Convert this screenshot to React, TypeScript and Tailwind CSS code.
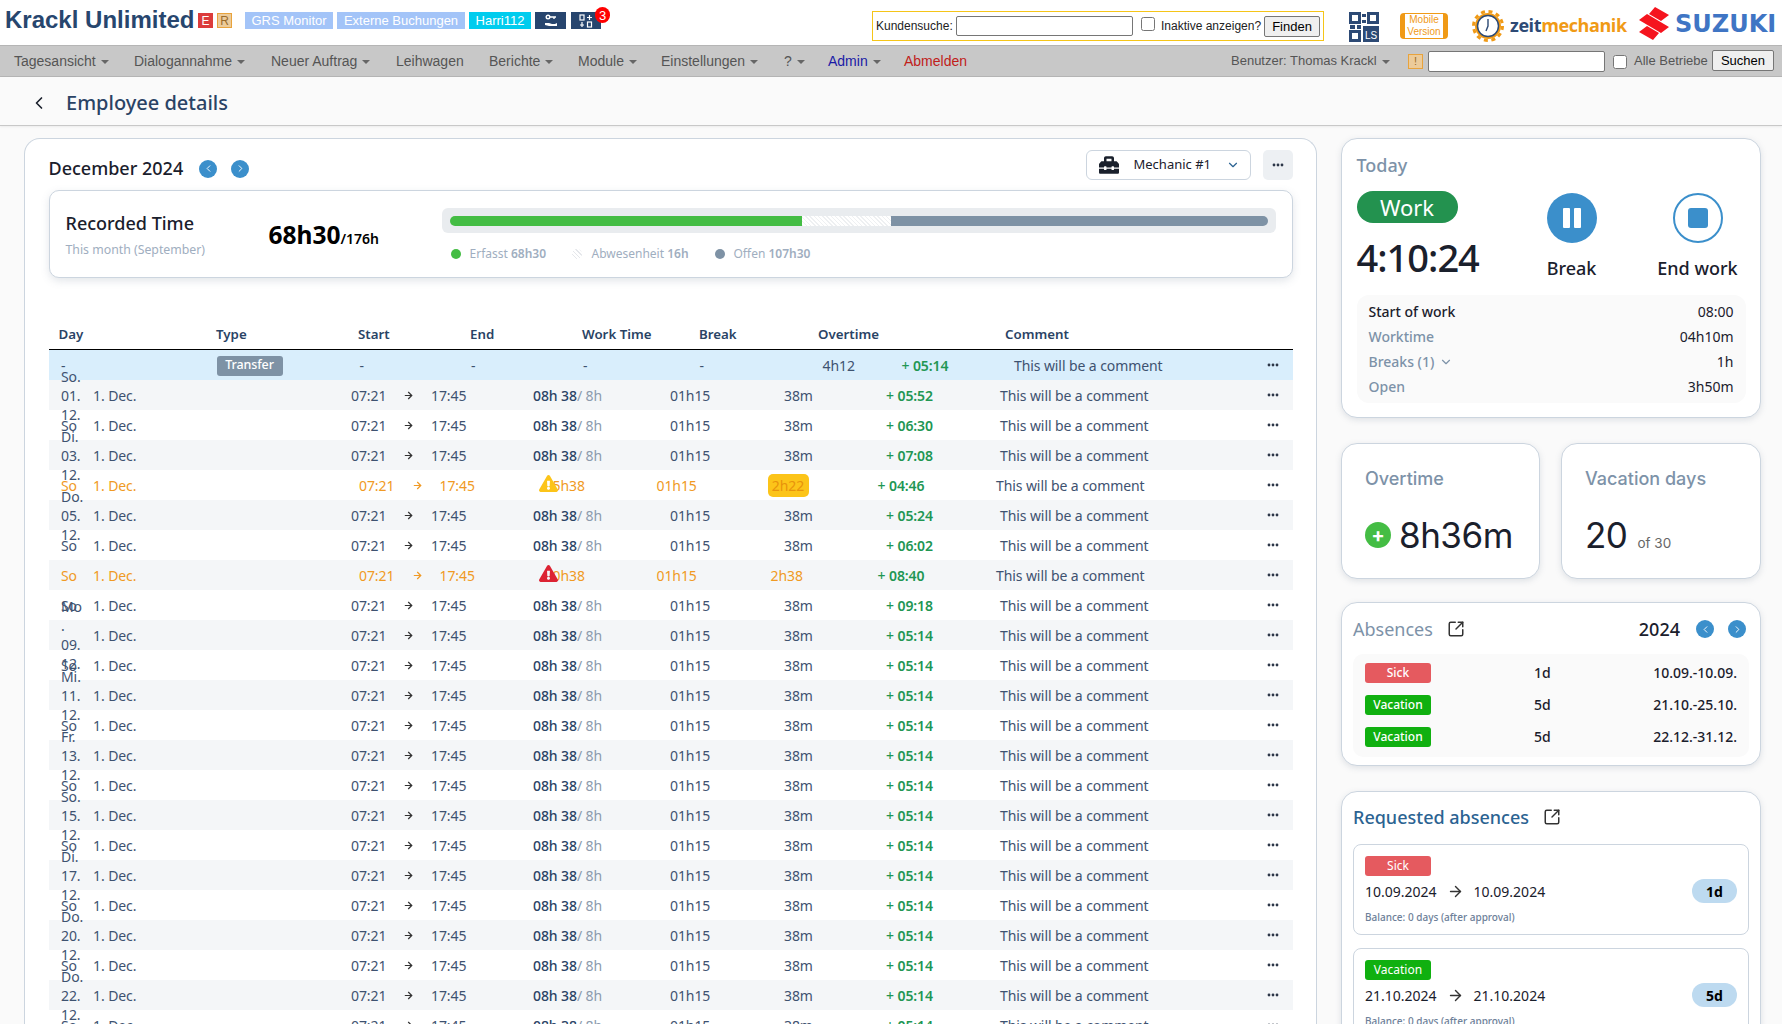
import React from "react";
import { ChevronDown, ChevronLeft, ChevronRight, ArrowRight, SquareArrowOutUpRight } from "lucide-react";
import { FaToolbox, FaExclamationTriangle } from "react-icons/fa";

const Caret = () => <span className="ml-[5px] inline-block border-x-[4px] border-t-[4px] border-x-transparent border-t-[#666] align-middle" />;

const Dots = () => (
  <svg width="12" height="4" viewBox="0 0 12 4" className="fill-[#2d3748]"><circle cx="2" cy="2" r="1.4" /><circle cx="6" cy="2" r="1.4" /><circle cx="10" cy="2" r="1.4" /></svg>
);

const RoundNav = ({ dir }: { dir: "l" | "r" }) => (
  <span className="flex h-[18px] w-[18px] items-center justify-center rounded-full bg-[#3b8fcb] text-white">
    {dir === "l" ? <ChevronLeft size={11} strokeWidth={2} /> : <ChevronRight size={11} strokeWidth={2} />}
  </span>
);

const Tag = ({ kind }: { kind: "Sick" | "Vacation" }) => (
  <span className={`flex h-[20px] w-[66px] items-center justify-center rounded-[3px] text-[12px] text-white ${kind === "Sick" ? "bg-[#e55a5f]" : "bg-[#10b010]"}`}>{kind}</span>
);

function Header() {
  return (
    <header className="flex h-[45px] items-start bg-white font-['Liberation_Sans',sans-serif]">
      <h1 className="ml-[5px] mt-[4px] w-[187px] whitespace-nowrap text-[24px] font-bold leading-[32px] text-[#27466e]">Krackl Unlimited</h1>
      <span className="ml-[6px] mt-[13px] flex h-[15px] w-[15px] items-center justify-center bg-[#dc3c3c] text-[12px] leading-none text-[#fff]">E</span>
      <span className="ml-[4px] mt-[13px] flex h-[15px] w-[15px] items-center justify-center border border-[#e8a33c] bg-[#eccb9a] text-[12px] leading-none text-[#9a6b2a]">R</span>
      <span className="ml-[13px] mt-[12px] flex h-[17px] w-[88px] items-center justify-center bg-[#a3c4f8] text-[13px] text-white">GRS Monitor</span>
      <span className="ml-[4px] mt-[12px] flex h-[17px] w-[128px] items-center justify-center whitespace-nowrap bg-[#a3c4f8] text-[13px] text-white">Externe Buchungen</span>
      <span className="ml-[4px] mt-[12px] flex h-[17px] w-[62px] items-center justify-center bg-[#00ccee] text-[13px] text-white">Harri112</span>
      <span className="ml-[4px] mt-[12px] flex h-[17px] w-[31px] items-center justify-center bg-[#27456e]">
        <svg width="16" height="14" viewBox="0 0 16 14" fill="none" stroke="#fff"><circle cx="5" cy="3" r="1.8" strokeWidth="1.4" /><path d="M7 3h6M11 3v2" strokeWidth="1.4" /><path d="M2 9h4l3 1h3l2-1v3H6l-4-1z" fill="#fff" stroke="none" /></svg>
      </span>
      <span className="relative ml-[5px] mt-[12px] flex h-[17px] w-[30px] items-center justify-center bg-[#27456e]">
        <svg width="14" height="14" viewBox="0 0 14 14" fill="none" stroke="#fff" strokeWidth="1.2"><rect x="1" y="1" width="4" height="5" /><path d="M8 3.5h5M10.5 1v5" /><path d="M3 8v5M1 11h4" /><rect x="8.5" y="8" width="4" height="5" /></svg>
        <span className="absolute left-[24px] top-[-5px] flex h-[16px] w-[15px] items-center justify-center rounded-full bg-[#f00] text-[13px] leading-none text-white">3</span>
      </span>
      <div className="ml-[271px] mt-[11px] flex h-[30px] w-[452px] items-center border border-[#f5c518] pl-[3px] text-[12px] text-[#222]">
        <span className="w-[80px] whitespace-nowrap">Kundensuche:</span>
        <input className="h-[20px] w-[177px] rounded-[2px] border border-[#767676] bg-white" />
        <input type="checkbox" className="-mt-[4px] ml-[8px] h-[14px] w-[14px]" />
        <span className="ml-[6px] w-[100px] whitespace-nowrap">Inaktive anzeigen?</span>
        <button className="ml-[3px] h-[21px] w-[56px] rounded-[2px] border border-[#767676] bg-[#efefef] text-[13px] text-black">Finden</button>
      </div>
      <svg width="30" height="30" viewBox="0 0 30 30" className="ml-[25px] mt-[12px]">
        <rect width="30" height="30" fill="#fff" />
        <g fill="#2d4a75">
          <rect x="0" y="0" width="12" height="12" /><rect x="18" y="0" width="12" height="12" /><rect x="0" y="18" width="12" height="12" /><rect x="14" y="14" width="16" height="16" />
          <rect x="13" y="2" width="4" height="3" /><rect x="13" y="8" width="4" height="3" /><rect x="1" y="13" width="5" height="4" /><rect x="8" y="13" width="4" height="4" />
        </g>
        <g fill="#fff"><rect x="3" y="3" width="6" height="6" /><rect x="21" y="3" width="6" height="6" /><rect x="3" y="21" width="6" height="6" /></g>
        <text x="16" y="27" fill="#fff" fontSize="10" fontFamily="Liberation Sans">LS</text>
      </svg>
      <div className="ml-[21px] mt-[13px] flex h-[26px] w-[48px] flex-col items-center justify-center rounded-[4px] border-x-[5px] border-y-[1px] border-[#f09a16] bg-white text-[10px] leading-[12px] text-[#f09a16]">
        <span>Mobile</span><span>Version</span>
      </div>
      <svg width="32" height="32" viewBox="0 0 32 32" className="ml-[24px] mt-[10px]">
        <circle cx="16" cy="16" r="13" fill="#f09a16" />
        <circle cx="16" cy="16" r="14.5" fill="none" stroke="#f09a16" strokeWidth="3" strokeDasharray="4 3.6" />
        <circle cx="16" cy="16" r="10.5" fill="#fff" stroke="#2d4a75" strokeWidth="1.5" />
        <path d="M16 9v7l-2 5" fill="none" stroke="#2d4a75" strokeWidth="1.4" />
      </svg>
      <div className="ml-[6px] mt-[13px] w-[118px] whitespace-nowrap text-[18px] font-bold leading-[24px] font-['Open_Sans',sans-serif] tracking-[-0.4px]">
        <span className="text-[#2d4a75]">zeit</span><span className="text-[#f09a16]">mechanik</span>
      </div>
      <svg width="32" height="33" viewBox="0 0 32 33" className="ml-[10px] mt-[7px]">
        <path d="M17 0 L31 8 L23 14 L11 7 Z M1 13 L9 7 L31 20 L23 26 Z M1 25 L9 19 L21 26 L15 33 Z" fill="#f5141e" />
      </svg>
      <div className="ml-[5px] mt-[11px] whitespace-nowrap text-[24px] font-bold leading-[26px] font-['DejaVu_Sans',sans-serif] text-[#3f75c4]">SUZUKI</div>
    </header>
  );
}

function Nav() {
  return (
    <nav className="flex h-[32px] items-center border-y border-y-[#b5b5b5] bg-[#c8c8c8] font-['Liberation_Sans',sans-serif] text-[14px]">
      <div className="flex">
        <span className="w-[134px] whitespace-nowrap pl-[14px] text-[#555]">Tagesansicht<Caret /></span>
        <span className="w-[137px] whitespace-nowrap text-[#555]">Dialogannahme<Caret /></span>
        <span className="w-[125px] whitespace-nowrap text-[#555]">Neuer Auftrag<Caret /></span>
        <span className="w-[93px] whitespace-nowrap text-[#555]">Leihwagen</span>
        <span className="w-[89px] whitespace-nowrap text-[#555]">Berichte<Caret /></span>
        <span className="w-[83px] whitespace-nowrap text-[#555]">Module<Caret /></span>
        <span className="w-[123px] whitespace-nowrap text-[#555]">Einstellungen<Caret /></span>
        <span className="w-[44px] whitespace-nowrap text-[#555]">?<Caret /></span>
        <span className="w-[76px] whitespace-nowrap text-[#1a1aa6]">Admin<Caret /></span>
        <span className="w-[327px] whitespace-nowrap text-[#c0201a]">Abmelden</span>
      </div>
      <span className="w-[177px] whitespace-nowrap text-[13px] text-[#555]">Benutzer: Thomas Krackl<Caret /></span>
      <span className="flex h-[15px] w-[15px] items-center justify-center border border-[#e8a33c] bg-[#eccb9a] text-[11px] text-[#9a6b2a]">!</span>
      <input className="ml-[5px] h-[21px] w-[177px] rounded-[2px] border border-[#767676] bg-white" />
      <input type="checkbox" className="ml-[8px] mt-[2px] h-[14px] w-[14px]" />
      <span className="ml-[7px] w-[78px] whitespace-nowrap text-[13px] text-[#555]">Alle Betriebe</span>
      <button className="-mt-[2px] h-[21px] w-[62px] rounded-[2px] border border-[#767676] bg-[#efefef] text-[13px] text-black">Suchen</button>
    </nav>
  );
}

type Row = { day: string[]; kind?: "warn" | "err"; plus: string };
const ROWS: Row[] = [
  { day: ["So.", "01.", "12."], plus: "05:52" },
  { day: ["So"], plus: "06:30" },
  { day: ["Di.", "03.", "12."], plus: "07:08" },
  { day: ["So"], kind: "warn", plus: "04:46" },
  { day: ["Do.", "05.", "12."], plus: "05:24" },
  { day: ["So"], plus: "06:02" },
  { day: ["So"], kind: "err", plus: "08:40" },
  { day: ["So"], plus: "09:18" },
  { day: ["Mo", ".", "09.", "12."], plus: "05:14" },
  { day: ["So"], plus: "05:14" },
  { day: ["Mi.", "11.", "12."], plus: "05:14" },
  { day: ["So"], plus: "05:14" },
  { day: ["Fr.", "13.", "12."], plus: "05:14" },
  { day: ["So"], plus: "05:14" },
  { day: ["So.", "15.", "12."], plus: "05:14" },
  { day: ["So"], plus: "05:14" },
  { day: ["Di.", "17.", "12."], plus: "05:14" },
  { day: ["So"], plus: "05:14" },
  { day: ["Do.", "20.", "12."], plus: "05:14" },
  { day: ["So"], plus: "05:14" },
  { day: ["Do.", "22.", "12."], plus: "05:14" },
  { day: ["So"], plus: "05:14" },
];

const Plus = ({ v }: { v: string }) => (
  <span className="font-semibold text-[#219653]"><span className="font-medium">+ </span>{v}</span>
);

const DayCell = ({ lines, cls = "" }: { lines: string[]; cls?: string }) => (
  <div className={`flex h-[30px] flex-col justify-center leading-[19px] ${cls}`}>
    {lines.map((l, i) => <span key={i} className="block shrink-0 whitespace-nowrap">{l}</span>)}
  </div>
);

function TableRow({ r, i }: { r: Row; i: number }) {
  const bg = i % 2 === 0 ? "bg-[#f4f6f8]" : "bg-white";
  if (r.kind) {
    return (
      <div className={`grid h-[30px] grid-cols-[32px_266px_52.5px_28px_99px_118px_111px_110px_118.5px_271px_auto] items-center pl-[12.5px] text-[#f09a24] ${bg}`}>
        <DayCell lines={r.day} />
        <span>1. Dec.</span>
        <span>07:21</span>
        <ArrowRight size={11} strokeWidth={2.6} />
        <span>17:45</span>
        <span className="relative pl-[14px]">
          {r.kind === "warn" ? "5h38" : "0h38"}
          <FaExclamationTriangle size={19} className={`absolute left-0 top-[-1px] ${r.kind === "warn" ? "text-[#fcc419]" : "text-[#dc2333]"}`} />
        </span>
        <span>01h15</span>
        {r.kind === "warn"
          ? <span className="flex h-[23px] w-[41px] items-center justify-center rounded-[5px] bg-[#fcc419] text-[#e8930c]">2h22</span>
          : <span className="pl-[3px]">2h38</span>}
        <Plus v={r.plus} />
        <span className="text-[#3e5270]">This will be a comment</span>
        <span className="text-[#2d3748]"><Dots /></span>
      </div>
    );
  }
  return (
    <div className={`grid h-[30px] grid-cols-[32px_258px_52px_28px_102px_137px_114px_102px_114px_267px_auto] items-center pl-[12.5px] text-[#3e5270] ${bg}`}>
      <DayCell lines={r.day} />
      <span>1. Dec.</span>
      <span>07:21</span>
      <ArrowRight size={11} strokeWidth={2.6} className="text-[#333]" />
      <span>17:45</span>
      <span className="whitespace-nowrap"><span className="font-medium text-[#2a4365]">08h 38</span><span className="text-[#8c9bad]">/ 8h</span></span>
      <span>01h15</span>
      <span>38m</span>
      <Plus v={r.plus} />
      <span>This will be a comment</span>
      <Dots />
    </div>
  );
}

function MainCard() {
  return (
    <section className="w-[1293px] shrink-0 rounded-t-[16px] border border-b-0 border-[#ccd5df] bg-white px-[23.5px] pt-[11px]">
      <div className="flex h-[30px] items-center">
        <h2 className="mt-[7px] text-[18px] font-medium text-[#1a202c]">December 2024</h2>
        <span className="ml-[16px] mt-[7px]"><RoundNav dir="l" /></span>
        <span className="ml-[14px] mt-[7px]"><RoundNav dir="r" /></span>
        <div className="ml-auto flex h-[30px] w-[165px] items-center rounded-[6px] border border-[#ccd5df] bg-white pl-[12px] text-[13px] text-[#1a202c]">
          <FaToolbox size={20} />
          <span className="ml-[15px]">Mechanic #1</span>
          <ChevronDown size={14} className="ml-[15px] text-[#2b6392]" />
        </div>
        <button className="ml-[12px] flex h-[30px] w-[30px] items-center justify-center rounded-[5px] bg-[#edf0f3]"><Dots /></button>
      </div>
      <div className="mt-[10px] flex h-[88px] rounded-[10px] border border-[#ccd5df] bg-white shadow-[0_3px_8px_rgba(100,116,139,0.18)]">
        <div className="w-[219px] pl-[16px] pt-[19px]">
          <div className="text-[18px] font-medium leading-[26px] text-[#1a202c]">Recorded Time</div>
          <div className="mt-[6px] text-[12.3px] leading-[16px] text-[#a0aec0]">This month (September)</div>
        </div>
        <div className="w-[173px] pt-[28px] font-semibold text-black"><span className="text-[24.5px] font-bold leading-[32px]">68h30</span><span className="text-[14px]">/176h</span></div>
        <div className="w-[834px] pt-[17px]">
          <div className="flex h-[25px] items-center rounded-[6px] bg-[#e9ecef] px-[8px]">
            <div className="h-[10px] w-[352px] rounded-l-[5px] bg-[#44bd44]" />
            <div className="h-[10px] w-[89px] bg-[repeating-linear-gradient(45deg,#eef0f2_0,#eef0f2_1px,#fff_1px,#fff_3px)]" />
            <div className="h-[10px] w-[377px] rounded-r-[5px] bg-[#7e92a5]" />
          </div>
          <div className="mt-[13px] flex items-center pl-[9px] text-[12px] leading-[16px] text-[#a0aec0]">
            <span className="h-[10px] w-[10px] rounded-full bg-[#44bd44]" />
            <span className="ml-[9px] w-[102px] whitespace-nowrap">Erfasst <b className="font-semibold">68h30</b></span>
            <span className="h-[10px] w-[10px] rounded-full bg-[repeating-linear-gradient(45deg,#e5e7eb_0,#e5e7eb_1px,#fff_1px,#fff_3px)]" />
            <span className="ml-[10px] w-[123px] whitespace-nowrap">Abwesenheit <b className="font-semibold">16h</b></span>
            <span className="h-[10px] w-[10px] rounded-full bg-[#7e92a5]" />
            <span className="ml-[9px] whitespace-nowrap">Offen <b className="font-semibold">107h30</b></span>
          </div>
        </div>
      </div>
      <div className="mt-[44px] grid h-[28px] grid-cols-[157.5px_142px_112px_112px_117px_119px_187px_auto] items-center border-b border-b-black pb-[2px] pl-[10px] text-[13.3px] font-semibold text-[#2a4365]">
        <span>Day</span><span>Type</span><span>Start</span><span>End</span><span>Work Time</span><span>Break</span><span>Overtime</span><span>Comment</span>
      </div>
      <div className="text-[14px] tracking-[-0.09px]">
        <div className="grid h-[30px] grid-cols-[155.5px_143px_111.6px_111.9px_116.5px_123px_79px_112.5px_253px_auto] items-center bg-[#d9eefc] pl-[12.5px] text-[#3e5270]">
          <span>-</span>
          <span className="mt-[1px] flex h-[20px] w-[66px] items-center justify-center rounded-[3px] bg-[#7e92a5] text-[12.5px] font-medium text-white">Transfer</span>
          <span>-</span><span>-</span><span>-</span><span>-</span>
          <span>4h12</span>
          <Plus v="05:14" />
          <span>This will be a comment</span>
          <Dots />
        </div>
        {ROWS.map((r, i) => <TableRow key={i} r={r} i={i} />)}
      </div>
    </section>
  );
}

const Card = ({ children, cls = "" }: { children: React.ReactNode; cls?: string }) => (
  <div className={`rounded-[16px] border border-[#ccd5df] bg-white shadow-[0_2px_6px_rgba(100,116,139,0.18)] ${cls}`}>{children}</div>
);

function Today() {
  return (
    <Card cls="h-[280px] px-[14.5px] pt-[13px]">
      <div className="text-[18px] font-medium leading-[26px] text-[#7d92a8]">Today</div>
      <div className="mt-[13px] flex h-[90px]">
        <div className="w-[181px]">
          <div className="flex h-[32px] w-[101px] items-center justify-center rounded-full bg-[#23924f] text-[22px] text-white">Work</div>
          <div className="mt-[11px] whitespace-nowrap text-[38px] font-medium leading-[46px] tracking-[-1px] text-[#1a202c]">4:10:24</div>
        </div>
        <div className="flex w-[68px] flex-col items-center pt-[2px]">
          <span className="flex h-[50px] w-[50px] items-center justify-center gap-[4px] rounded-full bg-[#3b8fcb]">
            <span className="h-[20px] w-[7px] rounded-[1px] bg-white" /><span className="h-[20px] w-[7px] rounded-[1px] bg-white" />
          </span>
          <span className="mt-[12px] whitespace-nowrap text-[18px] font-medium leading-[26px] text-[#1a202c]">Break</span>
        </div>
        <div className="ml-[50px] flex w-[84px] flex-col items-center pt-[2px]">
          <span className="flex h-[50px] w-[50px] items-center justify-center rounded-full border-2 border-[#3b8fcb] bg-white">
            <span className="h-[20px] w-[20px] rounded-[3px] bg-[#3b8fcb]" />
          </span>
          <span className="mt-[12px] whitespace-nowrap text-[18px] font-medium leading-[26px] text-[#1a202c]">End work</span>
        </div>
      </div>
      <div className="mt-[14px] rounded-[12px] bg-[#fafafa] px-[12px] py-[4px] text-[14px] leading-[25px] text-[#1a202c]">
        <div className="flex justify-between font-medium"><span>Start of work</span><span className="font-normal">08:00</span></div>
        <div className="flex justify-between"><span className="font-medium text-[#7d92a8]">Worktime</span><span>04h10m</span></div>
        <div className="flex justify-between"><span className="flex items-center font-medium text-[#7d92a8]">Breaks (1)<ChevronDown size={14} className="ml-[5px]" /></span><span>1h</span></div>
        <div className="flex justify-between"><span className="font-medium text-[#7d92a8]">Open</span><span>3h50m</span></div>
      </div>
    </Card>
  );
}

function Stats() {
  return (
    <div className="mt-[25px] flex gap-[21px] font-['Inter',sans-serif]">
      <Card cls="h-[136px] w-[199px] pl-[23px] pt-[22px]">
        <div className="text-[18px] font-medium leading-[26px] text-[#7d92a8]">Overtime</div>
        <div className="mt-[19px] flex h-[48px] items-center">
          <span className="flex h-[26px] w-[26px] items-center justify-center rounded-full bg-[#44bd44] text-[20px] font-bold leading-none text-white">+</span>
          <span className="ml-[8px] text-[35px] leading-[48px] tracking-[-0.5px] text-[#1a202c]">8h36m</span>
        </div>
      </Card>
      <Card cls="h-[136px] w-[200px] pl-[23px] pt-[22px]">
        <div className="text-[18px] font-medium leading-[26px] text-[#7d92a8]">Vacation days</div>
        <div className="mt-[19px] flex h-[48px] items-baseline">
          <span className="text-[35px] leading-[48px] tracking-[-0.5px] text-[#1a202c]">20</span>
          <span className="ml-[10px] text-[13.5px] text-[#666]">of 30</span>
        </div>
      </Card>
    </div>
  );
}

function Absences() {
  const rows: ["Sick" | "Vacation", string, string][] = [
    ["Sick", "1d", "10.09.-10.09."],
    ["Vacation", "5d", "21.10.-25.10."],
    ["Vacation", "5d", "22.12.-31.12."],
  ];
  return (
    <Card cls="mt-[23px] h-[164px] px-[11px] pt-[12px]">
      <div className="flex h-[28px] items-center pr-[3px]">
        <span className="text-[18px] leading-[26px] text-[#7d92a8]">Absences</span>
        <SquareArrowOutUpRight size={18} className="ml-[14px] text-[#333]" />
        <span className="ml-auto text-[18px] font-medium text-[#1a202c]">2024</span>
        <span className="ml-[16px]"><RoundNav dir="l" /></span>
        <span className="ml-[14px]"><RoundNav dir="r" /></span>
      </div>
      <div className="mt-[11px] h-[103px] rounded-[10px] bg-[#fafafa] px-[12px] pt-[9px]">
        {rows.map(([k, d, r], i) => (
          <div key={i} className="grid h-[32px] grid-cols-[169px_60px_1fr] items-start text-[14px] font-medium text-[#1a202c]">
            <Tag kind={k} /><span className="leading-[20px]">{d}</span><span className="text-right leading-[20px]">{r}</span>
          </div>
        ))}
      </div>
    </Card>
  );
}

const ReqCard = ({ kind, a, d }: { kind: "Sick" | "Vacation"; a: string; d: string }) => (
  <div className="h-[91px] rounded-[8px] border border-[#ccd5df] bg-white px-[11px] pt-[11px]">
    <Tag kind={kind} />
    <div className="mt-[3px] flex h-[24px] items-center text-[14px] text-[#1a202c]">
      <span>{a}</span>
      <ArrowRight size={17} className="mx-[10px] text-[#333]" />
      <span>{a}</span>
      <span className="ml-auto flex h-[24px] w-[45px] items-center justify-center rounded-full bg-[#bddaf0] font-bold text-black">{d}</span>
    </div>
    <div className="mt-[7px] text-[10px] font-medium leading-[14px] text-[#6d8099]">Balance: 0 days (after approval)</div>
  </div>
);

function Requested() {
  return (
    <Card cls="mt-[25px] px-[11px] pt-[11px] pb-[12px]">
      <div className="flex h-[28px] items-center">
        <span className="text-[18px] font-medium leading-[26px] text-[#2b6392]">Requested absences</span>
        <SquareArrowOutUpRight size={18} className="ml-[14px] text-[#333]" />
      </div>
      <div className="mt-[13px] flex flex-col gap-[13px]">
        <ReqCard kind="Sick" a="10.09.2024" d="1d" />
        <ReqCard kind="Vacation" a="21.10.2024" d="5d" />
      </div>
    </Card>
  );
}

export default function App() {
  return (
    <div className="h-[1024px] w-[1782px] overflow-hidden bg-[#fafafa] font-['Noto_Sans',sans-serif]">
      <Header />
      <Nav />
      <div className="flex h-[49px] items-center border-b border-b-[#c8c8c8] bg-[#fafafa] pl-[29px] pt-[3px] shadow-[0_1px_2px_rgba(0,0,0,0.06)]">
        <ChevronLeft size={20} className="text-[#1a202c]" />
        <span className="ml-[17px] text-[20px] font-medium text-[#2a4365]">Employee details</span>
      </div>
      <main className="flex items-start gap-[24px] pl-[24px] pt-[12px]">
        <MainCard />
        <aside className="w-[420px] shrink-0">
          <Today />
          <Stats />
          <Absences />
          <Requested />
        </aside>
      </main>
    </div>
  );
}
